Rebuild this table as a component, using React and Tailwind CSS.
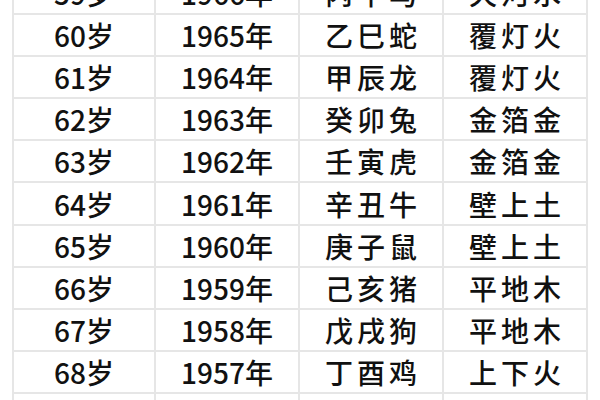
const rows = [
  ["59岁", "1966年", "丙午马", "天河水"],
  ["60岁", "1965年", "乙巳蛇", "覆灯火"],
  ["61岁", "1964年", "甲辰龙", "覆灯火"],
  ["62岁", "1963年", "癸卯兔", "金箔金"],
  ["63岁", "1962年", "壬寅虎", "金箔金"],
  ["64岁", "1961年", "辛丑牛", "壁上土"],
  ["65岁", "1960年", "庚子鼠", "壁上土"],
  ["66岁", "1959年", "己亥猪", "平地木"],
  ["67岁", "1958年", "戊戌狗", "平地木"],
  ["68岁", "1957年", "丁酉鸡", "上下火"],
  ["69岁", "1956年", "丙申猴", "山下火"],
];

const App = () => {
  return (
    <div className="w-[600px] h-[400px] overflow-hidden bg-white">
      <div
        className="ml-[12px] mt-[-27px] w-[576px] border-l-2 border-[#e6e6e6] text-[28px] font-medium text-[#111]"
        style={{ fontFamily: '"Noto Sans CJK SC", "Noto Sans", sans-serif' }}
      >
        {rows.map((row) => (
          <div key={row[0]} className="grid grid-cols-[142px_144px_144px_144px] h-[42.1px]">
            {row.map((cell, i) => (
              <div
                key={i}
                className={
                  "flex items-center justify-center border-r-2 border-b-2 border-[#e6e6e6] leading-none " +
                  (i >= 2 ? "tracking-[4px] pl-[4px]" : "")
                }
              >
                {cell}
              </div>
            ))}
          </div>
        ))}
      </div>
    </div>
  );
};

export default App;
